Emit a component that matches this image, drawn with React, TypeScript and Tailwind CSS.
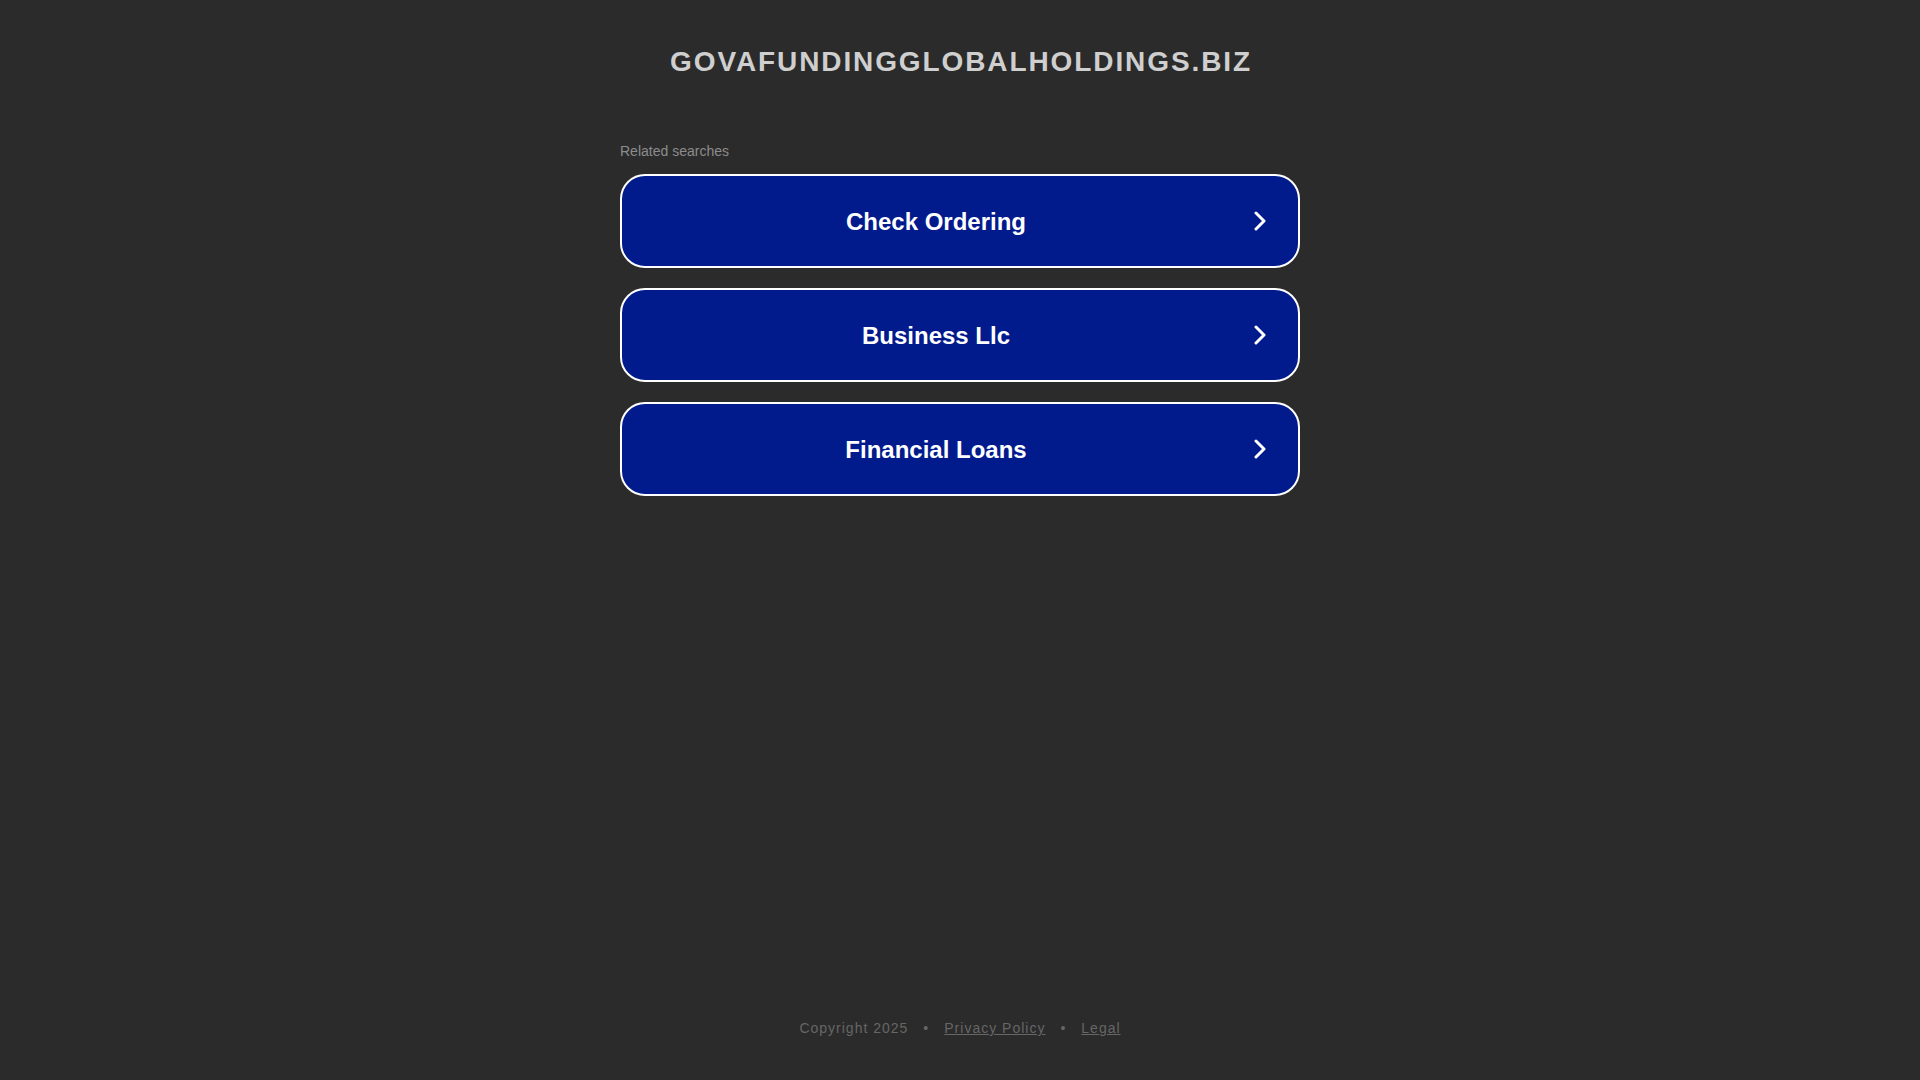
import React from 'react';

const SEARCHES = ['Check Ordering', 'Business Llc', 'Financial Loans'];

const Chevron: React.FC = () => (
  <svg width="12" height="20" viewBox="0 0 12 20" fill="none" className="shrink-0">
    <polyline points="2,2 10,10 2,18" stroke="#ffffff" strokeWidth="3" strokeLinecap="round" strokeLinejoin="round" />
  </svg>
);

export default function App() {
  return (
    <div className="min-h-screen bg-[#2b2b2b] flex flex-col items-center font-['Liberation_Sans',Arial,sans-serif]">
      <div className="pt-[45px] text-[28px] leading-[33px] font-bold tracking-[1.9px] text-[#cfcfcf] uppercase pl-[2px]">
        govafundingglobalholdings.biz
      </div>

      <div className="w-[680px] mt-[65px]">
        <div className="text-[14px] leading-[16px] text-[#8c8c8c] mb-[15px]">Related searches</div>
        <div className="flex flex-col gap-[20px]">
          {SEARCHES.map((s) => (
            <a
              key={s}
              href="#"
              className="flex items-center h-[94px] bg-[#011a8c] border-2 border-white rounded-[25px] text-white"
            >
              <span className="flex-1 text-center text-[24px] font-bold pr-[4px] pt-[2px]">{s}</span>
              <span className="mr-[32px] flex items-center">
                <Chevron />
              </span>
            </a>
          ))}
        </div>
      </div>

      <div className="mt-auto pb-[44px] flex items-center gap-[15px] text-[14px] leading-[16px] tracking-[1px] text-[#666666]">
        <span>Copyright 2025</span>
        <span>•</span>
        <a href="#" className="underline">Privacy Policy</a>
        <span>•</span>
        <a href="#" className="underline">Legal</a>
      </div>
    </div>
  );
}
